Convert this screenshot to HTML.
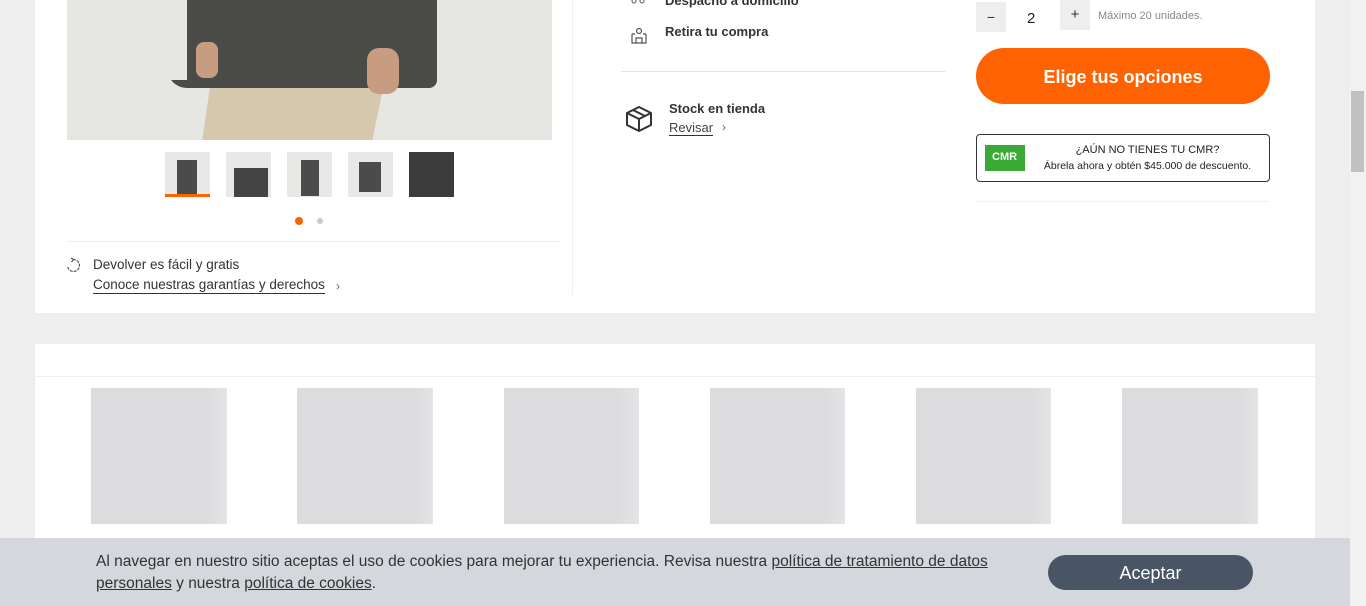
<!DOCTYPE html>
<html><head><meta charset="utf-8"><style>
*{margin:0;padding:0;box-sizing:border-box}
body{width:1366px;height:606px;overflow:hidden;background:#eeeeee;font-family:"Liberation Sans",sans-serif;color:#333;position:relative}
.abs{position:absolute}
.card1{left:35px;top:0;width:1280px;height:313px;background:#fff}
.card2{left:35px;top:344px;width:1280px;height:262px;background:#fff}
.ph{background:linear-gradient(90deg,#dcdbdd 0,#dcdbdd 85%,#e4e3e5 100%);width:136px;height:136px;top:388px}
.t{font-size:13px;color:#333}
.b{font-weight:bold}
</style></head><body>
<div class="abs card1"></div>
<!-- main image -->
<div class="abs" style="left:67px;top:0;width:485px;height:140px;background:#e6e6e2;overflow:hidden">
  <div class="abs" style="left:125px;top:70px;width:205px;height:70px;background:#d6c8ad;clip-path:polygon(10% 0,95% 0,88% 100%,5% 100%)"></div>
  <div class="abs" style="left:100px;top:0;width:270px;height:88px;background:#4a4a48;border-radius:0 0 8px 20px"></div>
  <div class="abs" style="left:100px;top:0;width:20px;height:80px;background:#e6e6e2"></div>
  <div class="abs" style="left:129px;top:42px;width:22px;height:36px;background:#c89c80;border-radius:8px"></div>
  <div class="abs" style="left:300px;top:48px;width:32px;height:46px;background:#c89c80;border-radius:12px"></div>
</div>
<!-- thumbnails -->
<div class="abs" style="left:165px;top:152px;width:45px;height:45px;background:#e8e8e6"><div class="abs" style="left:12px;top:8px;width:20px;height:34px;background:#4b4b4b"></div></div>
<div class="abs" style="left:165px;top:194px;width:45px;height:3px;background:#ff6200"></div>
<div class="abs" style="left:226px;top:152px;width:45px;height:45px;background:#e8e8e6"><div class="abs" style="left:8px;top:16px;width:34px;height:29px;background:#444"></div></div>
<div class="abs" style="left:287px;top:152px;width:45px;height:45px;background:#e8e8e6"><div class="abs" style="left:14px;top:8px;width:18px;height:36px;background:#4b4b4b"></div></div>
<div class="abs" style="left:348px;top:152px;width:45px;height:45px;background:#e8e8e6"><div class="abs" style="left:11px;top:10px;width:22px;height:30px;background:#4b4b4b"></div></div>
<div class="abs" style="left:409px;top:152px;width:45px;height:45px;background:#3b3b3b"></div>
<div class="abs" style="left:295px;top:217px;width:8px;height:8px;border-radius:50%;background:#ff6200"></div>
<div class="abs" style="left:317px;top:218px;width:6px;height:6px;border-radius:50%;background:#ccc"></div>
<div class="abs" style="left:67px;top:241px;width:493px;height:1px;background:#eee"></div>
<div class="abs" style="left:572px;top:0;width:1px;height:295px;background:#f0f0f0"></div>
<svg class="abs" style="left:65px;top:257px" width="16" height="16" viewBox="0 0 16 16"><path d="M8 2.5A6 6 0 1 1 2.5 9" fill="none" stroke="#555" stroke-width="1.2" stroke-dasharray="3 1"/><path d="M6 1l2.5 1.5L6.5 5" fill="none" stroke="#555" stroke-width="1.2"/></svg>
<div class="abs t" style="left:93px;top:257px;font-size:13.5px">Devolver es fácil y gratis</div>
<div class="abs t" style="left:93px;top:277px;border-bottom:1px solid #333;line-height:16px;font-size:13.5px">Conoce nuestras garantías y derechos</div>
<div class="abs" style="left:336px;top:279px;color:#666;font-size:12px">›</div>
<!-- middle -->
<div class="abs t b" style="left:665px;top:-7px">Despacho a domicilio</div>
<svg class="abs" style="left:628px;top:-4px" width="20" height="10"><circle cx="6" cy="5" r="2" fill="none" stroke="#555"/><circle cx="14" cy="5" r="2" fill="none" stroke="#555"/></svg>
<svg class="abs" style="left:629px;top:26px" width="20" height="18" viewBox="0 0 20 18"><path d="M3 8v9h14V8M3 8h3M14 8h3M7 17v-5h6v5" fill="none" stroke="#555" stroke-width="1.2"/><circle cx="10" cy="5" r="2.5" fill="none" stroke="#555" stroke-width="1.2"/></svg>
<div class="abs t b" style="left:665px;top:24px">Retira tu compra</div>
<div class="abs" style="left:621px;top:71px;width:325px;height:1px;background:#e5e5e5"></div>
<svg class="abs" style="left:624px;top:104px" width="30" height="30" viewBox="0 0 30 30"><path d="M15 3L3 9v12l12 6 12-6V9zM3 9l12 6 12-6M15 15v12M9 6l12 6" fill="none" stroke="#333" stroke-width="2" stroke-linejoin="round"/></svg>
<div class="abs t b" style="left:669px;top:101px">Stock en tienda</div>
<div class="abs t" style="left:669px;top:120px;border-bottom:1px solid #333;line-height:15px;color:#444">Revisar</div>
<div class="abs" style="left:722px;top:120px;color:#666;font-size:12px">›</div>
<!-- right -->
<div class="abs" style="left:976px;top:2px;width:30px;height:30px;background:#eee;text-align:center;line-height:30px;font-size:14px">−</div>
<div class="abs" style="left:1027px;top:10px;font-size:15px;color:#222">2</div>
<div class="abs" style="left:1060px;top:0;width:30px;height:30px;background:#eee;text-align:center;line-height:30px;font-size:15px">+</div>
<div class="abs" style="left:1098px;top:10px;font-size:11px;color:#888">Máximo 20 unidades.</div>
<div class="abs" style="left:976px;top:48px;width:294px;height:56px;border-radius:28px;background:#ff6200;color:#fff;font-weight:bold;font-size:18px;text-align:center;line-height:58px">Elige tus opciones</div>
<div class="abs" style="left:976px;top:134px;width:294px;height:48px;border:1px solid #333;border-radius:4px"></div>
<div class="abs" style="left:985px;top:145px;width:40px;height:26px;background:#3aa935;color:#fff;font-size:11px;font-weight:bold;padding:6px 0 0 7px">CMR</div>
<div class="abs" style="left:1030px;top:144px;width:235px;text-align:center;font-size:11px;color:#222">¿AÚN NO TIENES TU CMR?</div>
<div class="abs" style="left:1030px;top:160px;width:235px;text-align:center;font-size:10.5px;color:#222">Ábrela ahora y obtén $45.000 de descuento.</div>
<div class="abs" style="left:976px;top:201px;width:294px;height:1px;background:#f0f0f0"></div>
<!-- card2 -->
<div class="abs card2"></div>
<div class="abs" style="left:35px;top:376px;width:1280px;height:1px;background:#eee"></div>
<div class="abs ph" style="left:91px"></div>
<div class="abs ph" style="left:297px"></div>
<div class="abs ph" style="left:504px;width:135px"></div>
<div class="abs ph" style="left:710px;width:135px"></div>
<div class="abs ph" style="left:916px;width:135px"></div>
<div class="abs ph" style="left:1122px"></div>
<!-- scrollbar -->
<div class="abs" style="left:1349px;top:0;width:17px;height:606px;background:#f1f1f1"></div>
<div class="abs" style="left:1351px;top:91px;width:13px;height:81px;background:#c1c1c1"></div>
<!-- cookies -->
<div class="abs" style="left:0;top:538px;width:1350px;height:68px;background:#d4d7dc"></div>
<div class="abs" style="left:96px;top:551px;width:920px;font-size:15.5px;line-height:22px;color:#333">Al navegar en nuestro sitio aceptas el uso de cookies para mejorar tu experiencia. Revisa nuestra <u>política de tratamiento de datos personales</u> y nuestra <u>política de cookies</u>.</div>
<div class="abs" style="left:1048px;top:555px;width:205px;height:35px;border-radius:18px;background:#495565;color:#fff;font-size:18px;text-align:center;line-height:36px">Aceptar</div>
</body></html>
